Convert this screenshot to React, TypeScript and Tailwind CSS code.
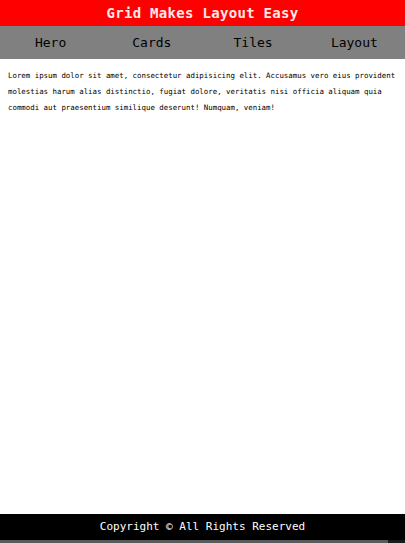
const NAV = ['Hero', 'Cards', 'Tiles', 'Layout'];

export default function App() {
  return (
    <div
      className="flex flex-col h-[543px] w-[405px] overflow-hidden bg-white"
      style={{ fontFamily: '"DejaVu Sans Mono", "Liberation Mono", monospace' }}
    >
      <header className="h-[26px] bg-[#ff0000] flex items-center justify-center">
        <h1 className="text-[14px] font-bold text-[#ffe8e8] tracking-[0.3px]">Grid Makes Layout Easy</h1>
      </header>
      <nav className="h-[33px] bg-[#808080] grid grid-cols-4 items-center">
        {NAV.map((item) => (
          <span key={item} className="text-center text-[13px] text-black">
            {item}
          </span>
        ))}
      </nav>
      <main className="flex-1 px-2 pt-[9px]">
        <p className="text-[7.4px] leading-[16px] text-black">
          Lorem ipsum dolor sit amet, consectetur adipisicing elit. Accusamus vero eius provident molestias harum alias
          distinctio, fugiat dolore, veritatis nisi officia aliquam quia commodi aut praesentium similique deserunt!
          Numquam, veniam!
        </p>
      </main>
      <footer className="h-[26px] bg-black flex items-center justify-center">
        <span className="text-[11px] text-white">Copyright © All Rights Reserved</span>
      </footer>
      <div className="h-[3px] flex">
        <div className="w-[388px] bg-[#5a5a5a]" />
        <div className="flex-1 bg-[#1a1a1a]" />
      </div>
    </div>
  );
}
